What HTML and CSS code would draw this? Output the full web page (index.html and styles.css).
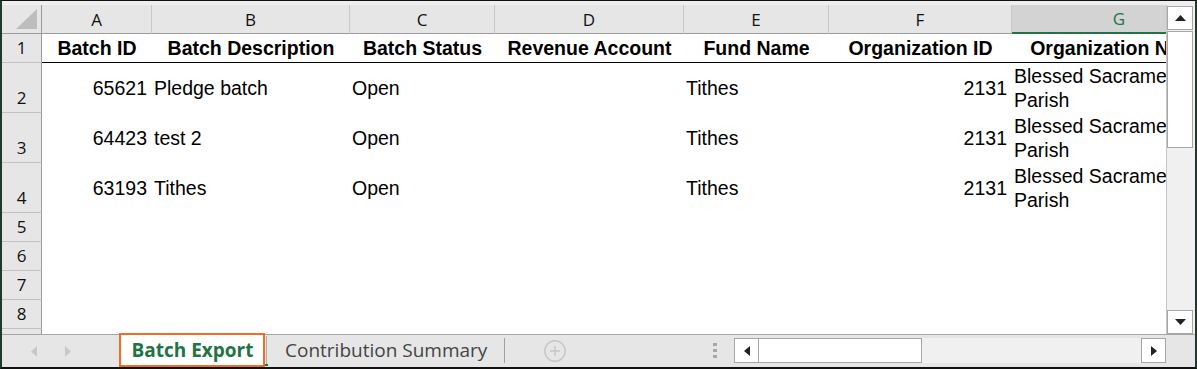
FILE: index.html
```html
<!DOCTYPE html>
<html>
<head>
<meta charset="utf-8">
<link rel="stylesheet" href="styles.css">
</head>
<body>
<div class="frame">
  <div class="topgap"></div>
  <div class="main">
    <div class="sheet">
      <div class="grid">
        <div class="ch corner"><svg width="22" height="21" viewBox="0 0 22 21"><polygon points="21,0 21,20 0,20" fill="#bdbdbd"/></svg></div>
        <div class="ch">A</div>
        <div class="ch">B</div>
        <div class="ch">C</div>
        <div class="ch">D</div>
        <div class="ch">E</div>
        <div class="ch">F</div>
        <div class="ch sel">G</div>

        <div class="rh">1</div>
        <div class="c h">Batch ID</div>
        <div class="c h">Batch Description</div>
        <div class="c h">Batch Status</div>
        <div class="c h">Revenue Account</div>
        <div class="c h">Fund Name</div>
        <div class="c h">Organization ID</div>
        <div class="c h">Organization Name</div>

        <div class="rh">2</div>
        <div class="c num">65621</div>
        <div class="c">Pledge batch</div>
        <div class="c">Open</div>
        <div class="c"></div>
        <div class="c">Tithes</div>
        <div class="c num">2131</div>
        <div class="c wrap">Blessed Sacramento Parish</div>

        <div class="rh">3</div>
        <div class="c num">64423</div>
        <div class="c">test 2</div>
        <div class="c">Open</div>
        <div class="c"></div>
        <div class="c">Tithes</div>
        <div class="c num">2131</div>
        <div class="c wrap">Blessed Sacramento Parish</div>

        <div class="rh">4</div>
        <div class="c num">63193</div>
        <div class="c">Tithes</div>
        <div class="c">Open</div>
        <div class="c"></div>
        <div class="c">Tithes</div>
        <div class="c num">2131</div>
        <div class="c wrap">Blessed Sacramento Parish</div>

        <div class="rh">5</div>
        <div class="c"></div><div class="c"></div><div class="c"></div><div class="c"></div><div class="c"></div><div class="c"></div><div class="c"></div>
        <div class="rh">6</div>
        <div class="c"></div><div class="c"></div><div class="c"></div><div class="c"></div><div class="c"></div><div class="c"></div><div class="c"></div>
        <div class="rh">7</div>
        <div class="c"></div><div class="c"></div><div class="c"></div><div class="c"></div><div class="c"></div><div class="c"></div><div class="c"></div>
        <div class="rh">8</div>
        <div class="c"></div><div class="c"></div><div class="c"></div><div class="c"></div><div class="c"></div><div class="c"></div><div class="c"></div>
        <div class="rh">9</div>
        <div class="c"></div><div class="c"></div><div class="c"></div><div class="c"></div><div class="c"></div><div class="c"></div><div class="c"></div>
      </div>
    </div>
    <div class="vscroll">
      <div class="sbtn vbtn"><svg width="11" height="6" viewBox="0 0 11 6"><polygon points="5.5,0 11,6 0,6" fill="#222"/></svg></div>
      <div class="vthumb"></div>
      <div class="vbtn sbtn down"><svg width="11" height="6" viewBox="0 0 11 6"><polygon points="0,0 11,0 5.5,6" fill="#222"/></svg></div>
    </div>
  </div>
  <div class="tabbar">
    <div class="nav">
      <svg width="6" height="11" viewBox="0 0 6 11"><polygon points="6,0 6,11 0,5.5" fill="#c8c8c8"/></svg>
      <svg width="6" height="11" viewBox="0 0 6 11"><polygon points="0,0 6,5.5 0,11" fill="#c8c8c8"/></svg>
    </div>
    <div class="tab active">Batch Export</div>
    <div class="tab other">Contribution Summary</div>
    <div class="sep"></div>
    <div class="plus"><svg width="22" height="22" viewBox="0 0 22 22"><circle cx="11" cy="11" r="10.2" fill="none" stroke="#c6c6c6" stroke-width="1.4"/><path d="M11 6v10M6 11h10" stroke="#c6c6c6" stroke-width="1.4"/></svg></div>
    <div class="dots"><span></span><span></span><span></span></div>
    <div class="hscroll">
      <div class="sbtn hbtn"><svg width="6" height="10" viewBox="0 0 6 10"><polygon points="6,0 6,10 0,5" fill="#222"/></svg></div>
      <div class="hthumb"></div>
      <div class="htrack"></div>
      <div class="sbtn hbtn"><svg width="6" height="10" viewBox="0 0 6 10"><polygon points="0,0 6,5 0,10" fill="#222"/></svg></div>
    </div>
  </div>
</div>
</body>
</html>
```

FILE: styles.css
```css
* { box-sizing: border-box; }
html, body { margin: 0; padding: 0; background: #fff; }

.frame {
  width: 1197px;
  height: 369px;
  border-top: 1px solid #111;
  border-bottom: 2px solid #111;
  border-left: 2px solid #1f3a2a;
  border-right: 2px solid #1f3a2a;
  display: flex;
  flex-direction: column;
  background: #eeeeee;
  overflow: hidden;
}

.topgap { height: 4px; flex: none; background: #eeeeee; }

.main { height: 329px; flex: none; display: flex; }

.sheet { width: 1164px; height: 329px; overflow: hidden; flex: none; background: #fff; }

.grid {
  display: grid;
  grid-template-columns: 40px 110px 198px 145px 189px 145px 183px 214px;
  grid-template-rows: 29px 29px 50px 50px 50px 29px 29px 29px 29px 29px;
  width: 1224px;
  font-family: "Liberation Sans", Arial, sans-serif;
  font-size: 19.5px;
  color: #000;
}

.ch {
  background: #e6e6e6;
  border-right: 1px solid #c8c8c8;
  border-bottom: 1px solid #9b9b9b;
  display: flex;
  align-items: center;
  justify-content: center;
  font-family: "Open Sans", "Noto Sans", sans-serif;
  font-size: 17px;
  color: #111;
}
.ch.corner { border-right: 1px solid #9b9b9b; align-items: flex-end; justify-content: flex-end; padding: 0 3px 3px 0; }
.ch.corner svg { display: block; }
.ch.sel { background: #d3d3d3; color: #217346; border-bottom: 2px solid #217346; border-right: none; }

.rh {
  background: #e6e6e6;
  border-right: 1px solid #9b9b9b;
  border-bottom: 1px solid #c2c2c2;
  display: flex;
  align-items: flex-end;
  justify-content: center;
  line-height: 28px;
  font-family: "Open Sans", "Noto Sans", sans-serif;
  font-size: 17px;
  color: #111;
}

.c {
  display: flex;
  align-items: center;
  padding: 0 2px;
  white-space: nowrap;
  line-height: 24px;
  background: #fff;
}
.c.h { font-weight: bold; justify-content: center; border-bottom: 1px solid #000; }
.c.num { justify-content: flex-end; padding-right: 5px; }
.c.wrap { white-space: normal; }

.vscroll {
  width: 29px;
  flex: none;
  border-left: 1px solid #c6c6c6;
  background: #f0f0f0;
  display: flex;
  flex-direction: column;
  padding: 1px 2px 0 0;
}
.sbtn {
  background: #fff;
  border: 1px solid #a6a6a6;
  display: flex;
  align-items: center;
  justify-content: center;
  flex: none;
}
.sbtn svg { display: block; }
.vbtn { height: 24px; }
.vthumb { height: 117px; margin-top: 1px; background: #fff; border: 1px solid #a6a6a6; flex: none; }
.vbtn.down { margin-top: auto; }

.tabbar {
  height: 33px;
  flex: none;
  border-top: 1px solid #a6a6a6;
  background: #e6e6e6;
  display: flex;
  align-items: flex-start;
  font-family: "Open Sans", "Noto Sans", sans-serif;
}

.nav { width: 117px; height: 32px; flex: none; display: flex; align-items: center; padding-left: 29px; gap: 28px; }
.nav svg { display: block; }

.tab { flex: none; display: flex; align-items: center; font-size: 19px; }
.tab.active {
  position: relative;
  width: 146px;
  height: 34px;
  margin-top: -2px;
  border: 2px solid #f26c21;
  background: #fff;
  color: #217346;
  font-weight: bold;
  justify-content: center;
  padding-left: 1px;
}
.tab.active::after {
  content: "";
  position: absolute;
  right: -5px;
  bottom: -1px;
  width: 3px;
  height: 2px;
  background: #217346;
}
.tab.other {
  width: 238px;
  height: 28px;
  margin-left: 1px;
  border-left: 1px solid #b0b0b0;
  padding-left: 18px;
  color: #444;
  margin-top: 1px;
}

.sep { width: 1px; height: 25px; margin-top: 3px; background: #a0a0a0; flex: none; }
.plus { margin-left: 39px; margin-top: 5px; flex: none; }
.plus svg { display: block; }

.dots { margin-left: 147px; margin-top: 8px; display: flex; flex-direction: column; gap: 3px; flex: none; }
.dots span { width: 4px; height: 3px; background: #a6a6a6; display: block; }

.hscroll { margin-left: 17px; margin-top: 3px; width: 432px; height: 25px; display: flex; flex: none; background: #f0f0f0; }
.hbtn { width: 25px; height: 25px; }
.hthumb { width: 163px; height: 25px; background: #fff; border: 1px solid #a6a6a6; border-left: none; flex: none; }
.htrack { flex: 1; }
```
